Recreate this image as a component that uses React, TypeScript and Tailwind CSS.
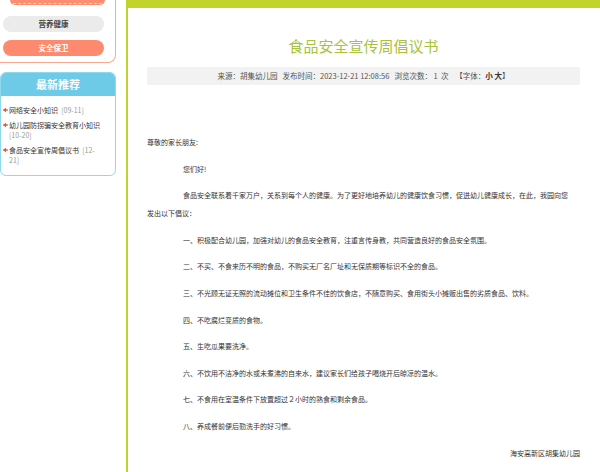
import React from "react";

const font = { fontFamily: '"Noto Sans CJK SC", "Noto Sans", sans-serif' };

function Bullet() {
  return (
    <svg width="6" height="6" viewBox="0 0 6 6" className="shrink-0 mt-[2px]">
      <path d="M0.5 3 L4 0.8 L4 2.2 L5.8 2.2 L5.8 3.8 L4 3.8 L4 5.2 Z" fill="#e05a3c" />
    </svg>
  );
}

export default function App() {
  const items = [
    { t: "网络安全小知识", d: "[09-11]" },
    { t: "幼儿园防拐骗安全教育小知识", d: "[10-20]" },
    { t: "食品安全宣传周倡议书", d: "[12-\u200b21]" },
  ];
  const paras = [
    "一、积极配合幼儿园，加强对幼儿的食品安全教育，注重言传身教，共同营造良好的食品安全氛围。",
    "二、不买、不食来历不明的食品，不购买无厂名厂址和无保质期等标识不全的食品。",
    "三、不光顾无证无照的流动摊位和卫生条件不佳的饮食店，不随意购买、食用街头小摊贩出售的劣质食品、饮料。",
    "四、不吃腐烂变质的食物。",
    "五、生吃瓜果要洗净。",
    "六、不饮用不洁净的水或未煮沸的自来水，建议家长们给孩子喝烧开后晾凉的温水。",
    "七、不食用在室温条件下放置超过２小时的熟食和剩余食品。",
    "八、养成餐前便后勤洗手的好习惯。",
  ];
  return (
    <div className="w-[600px] h-[472px] overflow-hidden bg-white flex" style={font}>
      {/* Sidebar */}
      <div className="w-[116px] shrink-0 flex flex-col">
        <div className="h-[63px] border border-t-0 border-l-0 border-[#f9a88f] rounded-br-[8px] flex flex-col">
          <div className="mx-[10px] h-[5px] bg-[#fa8e72] rounded-b-[5px] flex items-end px-[3px] pb-[1px]">
            <div className="w-full border-b border-dashed border-[#fcd0c2]" />
          </div>
          <div className="mt-[11px] ml-[3px] w-[101px] h-[16px] rounded-full bg-[#ebebeb] flex items-center justify-center text-[7.5px] font-bold text-[#444]">
            营养健康
          </div>
          <div className="mt-[8px] ml-[3px] w-[101px] h-[16px] rounded-full bg-[#fd8a6f] flex items-center justify-center text-[7.5px] font-bold text-white">
            安全保卫
          </div>
        </div>
        <div className="mt-[9px] h-[104px] border border-[#8fd8ee] rounded-[6px] overflow-hidden flex flex-col">
          <div className="h-[23px] bg-[#6dcbe7] flex items-center justify-center text-white font-bold text-[11px]">
            最新推荐
          </div>
          <div className="flex flex-col gap-[5px] pt-[9px] pl-[1px] pr-[13px]">
            {items.map((it) => (
              <div key={it.t} className="flex gap-[1px]">
                <Bullet />
                <p className="text-[7px] leading-[10px] text-[#333] whitespace-pre-wrap">
                  {it.t}
                  <span className="text-[#999]">{"  " + it.d}</span>
                </p>
              </div>
            ))}
          </div>
        </div>
      </div>

      {/* Main */}
      <div className="ml-[10px] flex-1 border-l-2 border-t-[8px] border-[#c1d42b] flex flex-col pl-[19px] pr-[20px]">
        <div className="pt-[28px] h-[59px] text-center text-[15px] leading-[20px] text-[#a9c23a]">
          食品安全宣传周倡议书
        </div>
        <div className="h-[18px] bg-[#f2f2f2] rounded-[2px] flex items-center justify-center text-[7.5px] text-[#555] whitespace-pre">
          {"来源：胡集幼儿园   发布时间：2023-12-21 12:08:56   浏览次数： 1  次    【字体："}
          <span className="font-bold text-[#333]">小 大</span>】
        </div>
        <div className="mt-[48px] text-[7px] leading-[18px] text-[#333] flex flex-col gap-[8.6px]">
          <p>尊敬的家长朋友:</p>
          <p className="indent-[36px]">您们好!</p>
          <p className="indent-[36px] pr-[10px]">
            食品安全联系着千家万户，关系到每个人的健康。为了更好地培养幼儿的健康饮食习惯，促进幼儿健康成长，在此，我园向您发出以下倡议：
          </p>
          {paras.map((p) => (
            <p key={p} className="indent-[36px]">{p}</p>
          ))}
          <p className="text-right">海安高新区胡集幼儿园</p>
        </div>
      </div>
    </div>
  );
}
